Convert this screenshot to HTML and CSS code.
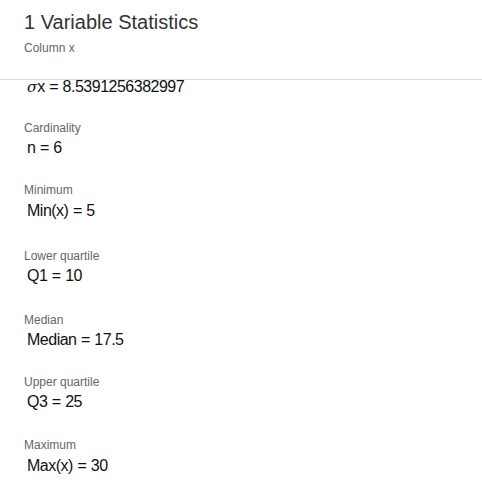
FILE: index.html
```html
<!DOCTYPE html>
<html>
<head>
<meta charset="utf-8">
<link rel="stylesheet" href="styles.css">
</head>
<body>
<div class="panel">
  <header class="head">
    <h1 class="title">1 Variable Statistics</h1>
    <div class="subtitle">Column x</div>
  </header>
  <div class="scroller">
    <div class="list">
      <div class="item first">
        <div class="value"><span class="mi">σ</span>x<span class="eq">=</span>8.5391256382997</div>
      </div>
      <div class="item">
        <div class="label">Cardinality</div>
        <div class="value">n<span class="eq">=</span>6</div>
      </div>
      <div class="item tall">
        <div class="label">Minimum</div>
        <div class="value">Min(x)<span class="eq">=</span>5</div>
      </div>
      <div class="item lq">
        <div class="label">Lower quartile</div>
        <div class="value">Q1<span class="eq">=</span>10</div>
      </div>
      <div class="item med">
        <div class="label">Median</div>
        <div class="value">Median<span class="eq">=</span>17.5</div>
      </div>
      <div class="item uq">
        <div class="label">Upper quartile</div>
        <div class="value">Q3<span class="eq">=</span>25</div>
      </div>
      <div class="item tall last">
        <div class="label">Maximum</div>
        <div class="value">Max(x)<span class="eq">=</span>30</div>
      </div>
    </div>
  </div>
</div>
</body>
</html>
```

FILE: styles.css
```css
* { box-sizing: border-box; }
html, body {
  margin: 0;
  padding: 0;
  background: #fff;
}
body {
  font-family: "Liberation Sans", Arial, sans-serif;
  width: 482px;
  height: 504px;
  overflow: hidden;
}
.panel {
  display: flex;
  flex-direction: column;
  height: 504px;
}
.head {
  padding: 10px 24px 0 24px;
  height: 80px;
  border-bottom: 1px solid #dcdcdc;
  flex: none;
}
.title {
  margin: 0;
  font-size: 20px;
  line-height: 24px;
  font-weight: normal;
  color: #333;
}
.subtitle {
  margin-top: 6px;
  font-size: 12px;
  line-height: 16px;
  color: #666;
}
.scroller {
  flex: 1;
}
.list {
  padding: 0 24px;
}
.item {
  display: flex;
  flex-direction: column;
  gap: 2px;
  margin-bottom: 24px;
}
.item.first { margin-bottom: 26px; }
.item.first .value { line-height: 14px; }
.item.tall { margin-bottom: 26px; }
.item.lq { margin-bottom: 26px; }
.item.med { margin-bottom: 24px; }
.item.uq { margin-bottom: 25px; }
.item.last { margin-bottom: 0; }
.label {
  font-size: 12px;
  line-height: 16px;
  color: #666;
}
.value {
  font-size: 16px;
  line-height: 20px;
  color: #111;
  padding-left: 3px;
  white-space: nowrap;
  letter-spacing: -0.5px;
}
.item.tall .value { line-height: 22px; }
.mi {
  font-family: "DejaVu Serif", "Liberation Serif", serif;
  font-style: italic;
  font-size: 15px;
  letter-spacing: 0;
}
.eq {
  margin: 0 4.5px;
}
```
